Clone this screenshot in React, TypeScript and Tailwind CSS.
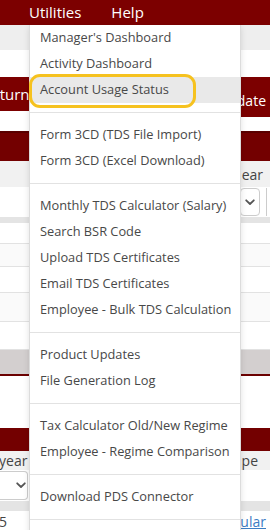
import React from "react";

const Chevron = () => (
  <svg width="10" height="7" viewBox="0 0 10 7" fill="none">
    <path d="M1.2 1.3 L5 5 L8.8 1.3" stroke="#555" strokeWidth="1.8" strokeLinecap="round" strokeLinejoin="round" />
  </svg>
);

type Entry = { t: string; hi?: boolean } | "div";

const entries: Entry[] = [
  { t: "Manager's Dashboard" },
  { t: "Activity Dashboard" },
  { t: "Account Usage Status", hi: true },
  "div",
  { t: "Form 3CD (TDS File Import)" },
  { t: "Form 3CD (Excel Download)" },
  "div",
  { t: "Monthly TDS Calculator (Salary)" },
  { t: "Search BSR Code" },
  { t: "Upload TDS Certificates" },
  { t: "Email TDS Certificates" },
  { t: "Employee - Bulk TDS Calculation" },
  "div",
  { t: "Product Updates" },
  { t: "File Generation Log" },
  "div",
  { t: "Tax Calculator Old/New Regime" },
  { t: "Employee - Regime Comparison" },
  "div",
  { t: "Download PDS Connector" },
  "div",
  { t: "" },
];

export default function App() {
  return (
    <div className="relative w-[270px] h-[530px] overflow-hidden bg-white font-['Open_Sans','Noto_Sans',sans-serif]">
      {/* Navbar */}
      <div className="h-[25px] bg-[#7c0000] flex items-center text-white text-[15px] leading-none">
        <span className="ml-[29px]">Utilities</span>
        <span className="ml-[30px]">Help</span>
      </div>
      <div className="h-[25px] bg-[#eeeeee]" />
      <div className="h-[27px] bg-white" />
      {/* Buttons row */}
      <div className="h-[54px] flex justify-between items-start overflow-hidden">
        <div className="h-[34px] bg-[#7c0000] -ml-[26px] pl-[8px] pr-[3px] flex items-center text-white text-[15px]">Return</div>
        <div className="h-[40px] bg-[#7c0000] -mr-[10px] pl-[6px] pr-[14px] flex items-center pt-[6px] text-white text-[14px]">Update</div>
      </div>
      {/* Card header */}
      <div className="h-[30px] bg-[#730000] border-t-2 border-[#5a0000]" />
      {/* label row */}
      <div className="h-[26px] bg-[#f1f1f1] flex items-center justify-end text-[14px] text-[#444]">
        <span className="mr-[7px]">ear</span>
      </div>
      {/* select row */}
      <div className="h-[30px] flex items-center justify-end">
        <div className="h-[28px] w-[20px] border border-[#ccc] rounded-[4px] flex items-center justify-center mr-[6px]">
          <Chevron />
        </div>
        <div className="h-[28px] w-[4px] border-l border-[#ccc]" />
      </div>
      <div className="h-[6px] bg-[#e4e4e4]" />
      {/* table rows */}
      <div className="h-[21px] border-b border-[#e2e2e2]" />
      <div className="h-[23px] border-b border-[#e2e2e2] bg-[#fafafa]" />
      <div className="h-[26px] border-b border-[#e2e2e2]" />
      <div className="h-[29px] border-b border-[#e2e2e2] bg-[#fafafa]" />
      <div className="h-[28px] border-b border-[#e2e2e2]" />
      {/* footer band */}
      <div className="h-[26px] bg-[#d3cfcf] border-b-2 border-[#6b0000]" />
      <div className="h-[52px] bg-white" />
      {/* second card */}
      <div className="h-[23px] bg-[#730000]" />
      <div className="h-[19px] bg-[#f1f1f1] flex items-center justify-between text-[14px] text-[#444]">
        <span className="-ml-[1px]">year</span>
        <span className="mr-[12px]">pe</span>
      </div>
      <div className="h-[31px] flex items-center">
        <div className="h-[29px] w-[28px] border border-[#ccc] border-l-0 rounded-r-[4px] flex items-center justify-end pr-[1px]">
          <Chevron />
        </div>
      </div>
      <div className="h-[10px] bg-[#e4e4e4]" />
      <div className="h-[20px] flex items-center justify-between text-[14px]">
        <span className="text-[#444] -ml-[9px]">15</span>
        <span className="text-[#3b7dc4] underline mr-[4px]">Regular</span>
      </div>

      {/* Dropdown menu overlay */}
      <div className="absolute left-[29px] top-[25px] w-[212px] bg-white border border-[#dcdcdc] border-t-0 shadow-[0_2px_6px_rgba(0,0,0,0.12)] text-[12.8px] text-[#484848]">
        {entries.map((e, i) =>
          e === "div" ? (
            <div key={i} className="h-px bg-[#e2e2e2] my-[9px]" />
          ) : (
            <div
              key={i}
              className={`h-[26px] flex items-center pl-[10px] whitespace-nowrap ${e.hi ? "bg-[#e9e9e9]" : ""}`}
            >
              {e.t}
            </div>
          )
        )}
      </div>
      {/* Yellow annotation */}
      <div className="absolute left-[29px] top-[74px] w-[167px] h-[34px] border-[3px] border-[#f6c21f] rounded-[11px]" />
    </div>
  );
}
